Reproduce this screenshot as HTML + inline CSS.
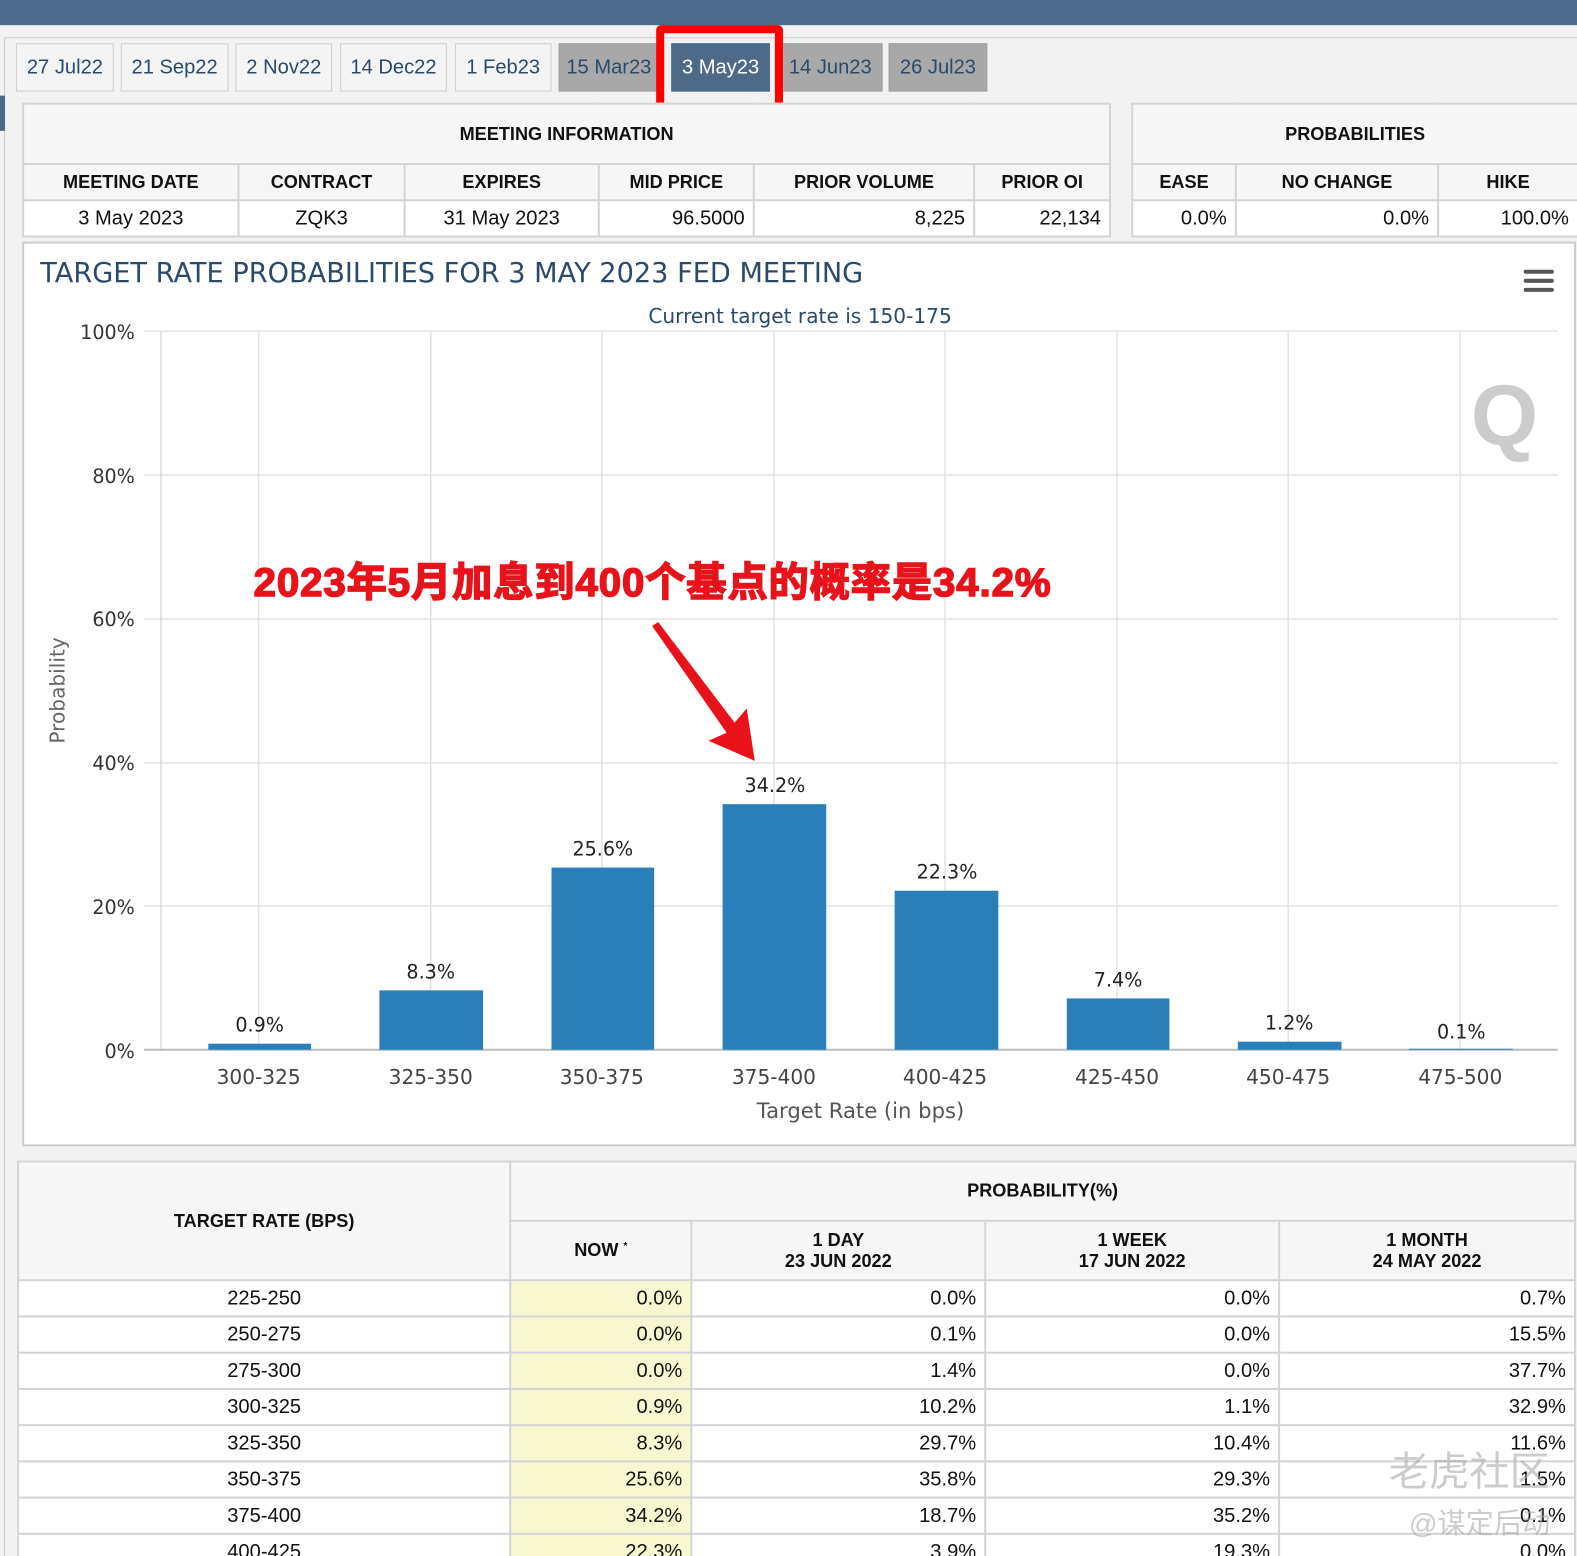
<!DOCTYPE html>
<html style="overflow:hidden"><head><meta charset="utf-8"><style>
*{margin:0;padding:0;box-sizing:border-box}
html,body{width:100%;height:100%;overflow:hidden;background:#f2f2f2}
#outer{position:fixed;left:0;top:0;width:100vw;height:100vh}
#w{position:relative;width:1577px;height:1556px;overflow:hidden;background:#f2f2f2;font-family:"Liberation Sans",Arial,sans-serif;color:#111}
.a{position:absolute}
.tab{position:absolute;top:43px;height:48px;border:1px solid #ccc;background:#f4f4f4;color:#2b4a6a;font-size:20px;line-height:46px;text-align:center}
.g{background:#a8a8a8;border-color:#a0a0a0}
table{border-collapse:collapse;position:absolute;background:#fff}
td,th{border:2px solid #d4d4d8;font-size:18px}
th{background:#f6f6f6;font-weight:bold}
td{text-align:right;padding-right:8px;font-size:20px}
td.c{text-align:center;padding:0}
.y{background:#f8f8d0}
</style></head><body>
<svg id="outer" viewBox="0 0 1567 1546" preserveAspectRatio="none"><foreignObject x="0" y="0" width="1577" height="1556"><div xmlns="http://www.w3.org/1999/xhtml" id="w">
<div class="a" style="left:0;top:0;width:1577px;height:25px;background:#4d6a89"></div>
<div class="a" style="left:4px;top:37px;width:1573px;height:1519px;border-left:1px solid #ccc;border-top:1px solid #ccc"></div>
<div class="a" style="left:0;top:95px;width:5px;height:35px;background:#4d6a89"></div>

<div class="tab" style="left:16px;width:97px">27 Jul22</div>
<div class="tab" style="left:120px;width:107px">21 Sep22</div>
<div class="tab" style="left:234px;width:96px">2 Nov22</div>
<div class="tab" style="left:338px;width:106px">14 Dec22</div>
<div class="tab" style="left:452px;width:96px">1 Feb23</div>
<div class="tab g" style="left:555px;width:100px">15 Mar23</div>
<div class="tab" style="left:667px;width:98px;background:#4d6a89;color:#fff;border-color:#4d6a89">3 May23</div>
<div class="tab g" style="left:773px;width:104px">14 Jun23</div>
<div class="tab g" style="left:883px;width:98px">26 Jul23</div>
<div class="a" style="left:652px;top:25px;width:126px;height:88px;border:8px solid #f00;border-radius:5px"></div>

<table style="left:22px;top:102px;width:1082px">
<tr style="height:60px"><th colspan="6">MEETING INFORMATION</th></tr>
<tr style="height:36px"><th style="width:214px">MEETING DATE</th><th style="width:165px">CONTRACT</th><th style="width:193px">EXPIRES</th><th style="width:154px">MID PRICE</th><th style="width:219px">PRIOR VOLUME</th><th>PRIOR OI</th></tr>
<tr style="height:36px"><td class="c">3 May 2023</td><td class="c">ZQK3</td><td class="c">31 May 2023</td><td>96.5000</td><td>8,225</td><td>22,134</td></tr>
</table>
<table style="left:1124px;top:102px;width:445px">
<tr style="height:60px"><th colspan="3">PROBABILITIES</th></tr>
<tr style="height:36px"><th style="width:103px">EASE</th><th style="width:201px">NO CHANGE</th><th>HIKE</th></tr>
<tr style="height:36px"><td>0.0%</td><td>0.0%</td><td>100.0%</td></tr>
</table>

<svg class="a" style="left:22px;top:240px" width="1544" height="899" viewBox="22 240 1544 899" font-family="DejaVu Sans, sans-serif">
<rect x="23" y="241" width="1542" height="897" fill="#fff" stroke="#ccc" stroke-width="2"/>
<text x="40" y="280" font-size="27" fill="#2b4a6a">TARGET RATE PROBABILITIES FOR 3 MAY 2023 FED MEETING</text>
<text x="795" y="321" font-size="20" fill="#2b4a6a" text-anchor="middle">Current target rate is 150-175</text>
<g stroke="#555" stroke-width="4" stroke-linecap="round"><line x1="1516" y1="270" x2="1542" y2="270"/><line x1="1516" y1="279" x2="1542" y2="279"/><line x1="1516" y1="288" x2="1542" y2="288"/></g>
<g stroke="#e2e2e2" stroke-width="1.5">
<line x1="143" y1="329" x2="1548" y2="329"/><line x1="143" y1="472" x2="1548" y2="472"/><line x1="143" y1="615" x2="1548" y2="615"/><line x1="143" y1="758" x2="1548" y2="758"/><line x1="143" y1="900" x2="1548" y2="900"/>
<line x1="257" y1="329" x2="257" y2="1043"/><line x1="428" y1="329" x2="428" y2="1043"/><line x1="598" y1="329" x2="598" y2="1043"/><line x1="769" y1="329" x2="769" y2="1043"/><line x1="939" y1="329" x2="939" y2="1043"/><line x1="1110" y1="329" x2="1110" y2="1043"/><line x1="1280" y1="329" x2="1280" y2="1043"/><line x1="1451" y1="329" x2="1451" y2="1043"/>
</g>
<line x1="160" y1="329" x2="160" y2="1043" stroke="#ccc"/>
<line x1="143" y1="1043" x2="1548" y2="1043" stroke="#bbb" stroke-width="2"/>
<text x="1495" y="442" font-size="86" font-weight="bold" fill="#ccc" text-anchor="middle" font-family="Liberation Sans">Q</text>
<g font-size="19" fill="#333" text-anchor="end"><text x="134" y="337">100%</text><text x="134" y="480">80%</text><text x="134" y="622">60%</text><text x="134" y="765">40%</text><text x="134" y="908">20%</text><text x="134" y="1051">0%</text></g>
<text transform="translate(64,686) rotate(-90)" font-size="20" fill="#666" text-anchor="middle">Probability</text>
<g fill="#2a7fba"><rect x="207" y="1037" width="102" height="6"/><rect x="377" y="984" width="103" height="59"/><rect x="548" y="862" width="102" height="181"/><rect x="718" y="799" width="103" height="244"/><rect x="889" y="885" width="103" height="158"/><rect x="1060" y="992" width="102" height="51"/><rect x="1230" y="1035" width="103" height="8"/><rect x="1400" y="1042" width="103" height="1"/></g>
<g font-size="19" fill="#222" text-anchor="middle"><text x="258" y="1025">0.9%</text><text x="428" y="972">8.3%</text><text x="599" y="850">25.6%</text><text x="770" y="787">34.2%</text><text x="941" y="873">22.3%</text><text x="1111" y="980">7.4%</text><text x="1281" y="1023">1.2%</text><text x="1452" y="1032">0.1%</text></g>
<g font-size="20" fill="#444" text-anchor="middle"><text x="257" y="1077">300-325</text><text x="428" y="1077">325-350</text><text x="598" y="1077">350-375</text><text x="769" y="1077">375-400</text><text x="939" y="1077">400-425</text><text x="1110" y="1077">425-450</text><text x="1280" y="1077">450-475</text><text x="1451" y="1077">475-500</text></g>
<text x="855" y="1111" font-size="21" fill="#555" text-anchor="middle">Target Rate (in bps)</text>
<text x="648" y="592" font-size="40" font-weight="bold" fill="#e8121a" stroke="#e8121a" stroke-width="1.5" text-anchor="middle" font-family="Liberation Sans, Noto Sans CJK SC, sans-serif" textLength="792">2023年5月加息到400个基点的概率是34.2%</text>
<path d="M648 622 L654 618 L730 718 L742 704 L750 756 L704 736 L722 728 Z" fill="#e8121a"/>
</svg>

<table style="left:17px;top:1153px;width:1549px">
<tr style="height:59px"><th rowspan="2" style="width:489px">TARGET RATE (BPS)</th><th colspan="4">PROBABILITY(%)</th></tr>
<tr style="height:59px"><th style="width:180px">NOW <sup style="font-size:10px">*</sup></th><th style="width:292px">1 DAY<br/>23 JUN 2022</th><th style="width:292px">1 WEEK<br/>17 JUN 2022</th><th>1 MONTH<br/>24 MAY 2022</th></tr>
<tr style="height:36px"><td class="c">225-250</td><td class="y">0.0%</td><td>0.0%</td><td>0.0%</td><td>0.7%</td></tr>
<tr style="height:36px"><td class="c">250-275</td><td class="y">0.0%</td><td>0.1%</td><td>0.0%</td><td>15.5%</td></tr>
<tr style="height:36px"><td class="c">275-300</td><td class="y">0.0%</td><td>1.4%</td><td>0.0%</td><td>37.7%</td></tr>
<tr style="height:36px"><td class="c">300-325</td><td class="y">0.9%</td><td>10.2%</td><td>1.1%</td><td>32.9%</td></tr>
<tr style="height:36px"><td class="c">325-350</td><td class="y">8.3%</td><td>29.7%</td><td>10.4%</td><td>11.6%</td></tr>
<tr style="height:36px"><td class="c">350-375</td><td class="y">25.6%</td><td>35.8%</td><td>29.3%</td><td>1.5%</td></tr>
<tr style="height:36px"><td class="c">375-400</td><td class="y">34.2%</td><td>18.7%</td><td>35.2%</td><td>0.1%</td></tr>
<tr style="height:36px"><td class="c">400-425</td><td class="y">22.3%</td><td>3.9%</td><td>19.3%</td><td>0.0%</td></tr>
</table>
<div class="a" style="left:1380px;top:1430px;font-size:40px;color:rgba(170,170,170,.6);font-family:'Liberation Sans','Noto Sans CJK SC',sans-serif">老虎社区</div>
<div class="a" style="left:1400px;top:1492px;font-size:28px;color:rgba(170,170,170,.6);font-family:'Liberation Sans','Noto Sans CJK SC',sans-serif">@谋定后动</div>
</div></foreignObject></svg>
</body></html>
